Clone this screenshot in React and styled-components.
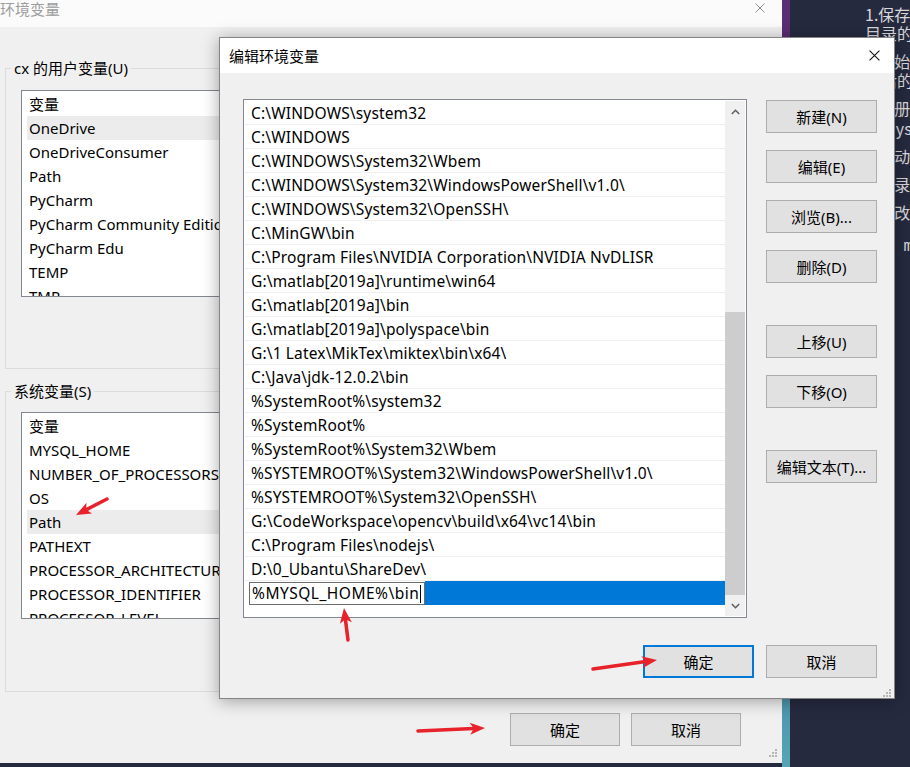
import React from 'react';
import styled, { createGlobalStyle } from 'styled-components';

const GlobalStyle = createGlobalStyle`
  html, body {
    margin: 0;
    padding: 0;
  }
  body {
    width: 910px;
    height: 767px;
    overflow: hidden;
    font-family: "Noto Sans", "Noto Sans CJK SC", sans-serif;
    font-size: 15px;
    color: #000;
  }
`;

const Desktop = styled.div`
  position: relative;
  width: 910px;
  height: 767px;
  overflow: hidden;
  background: #262a3f;
`;

const EdgeStrip = styled.div`
  position: absolute;
  left: 782px;
  top: 0;
  width: 8px;
  height: 100%;
  background: linear-gradient(#5b2d72 0%, #5b2d72 12%, #4a8ea6 88%, #58a4b7 100%);
`;

/* editor window behind the dialogs */
const Notes = styled.div`
  position: absolute;
  left: 865px;
  top: 5px;
  width: 320px;
  color: #d8d8dc;
  font-family: "Noto Sans CJK SC", sans-serif;
  font-size: 16px;
  line-height: 19px;
`;

const NoteLine = styled.p`
  margin: 0 0 ${p => (p.$gap !== undefined ? p.$gap : 9)}px;
  white-space: nowrap;
  font-family: ${p => (p.$mono ? '"Liberation Mono", monospace' : 'inherit')};
`;

/* ---------- 环境变量 window ---------- */
const Window = styled.div`
  position: absolute;
  left: 0;
  top: -6px;
  width: 782px;
  height: 769px;
  background: #f0f0f0;
  display: flex;
  flex-direction: column;
`;

const WindowTitle = styled.div`
  height: 33px;
  flex: none;
  display: flex;
  justify-content: space-between;
  align-items: flex-start;
  background: #fbfbfb;
  line-height: 30px;
  color: ${p => (p.$inactive ? '#9d9d9d' : '#000')};
  font-family: "Noto Sans CJK SC", sans-serif;
  padding-right: 17px;
`;

const CloseIcon = styled.svg`
  margin-top: ${p => p.$top}px;
  flex: none;
`;

const WindowBody = styled.div`
  flex: 1;
  display: flex;
  flex-direction: column;
  padding: 0 7px 0 5px;
`;

const Group = styled.fieldset`
  margin: ${p => p.$top}px 0 0;
  padding: ${p => p.$padTop}px 0 ${p => p.$padBottom}px 15px;
  border: 1px solid #dcdcdc;
  min-width: 0;
`;

const GroupLabel = styled.legend`
  padding: 0 3px;
  margin-left: -10px;
  line-height: 20px;
  font-size: 15px;
`;

const VarList = styled.div`
  box-sizing: border-box;
  width: 740px;
  height: 207px;
  border: 1px solid #828790;
  background: #fff;
  padding: 1px 0 0 5px;
  overflow: hidden;
`;

const VarRow = styled.div`
  height: 24px;
  line-height: 24px;
  padding-left: 2px;
  white-space: nowrap;
  background: ${p => (p.$hover ? '#ececec' : 'transparent')};
`;

const Footer = styled.div`
  display: flex;
  justify-content: flex-end;
  gap: 11px;
  margin-top: 21px;
  padding-right: 34px;
`;

const Button = styled.button`
  box-sizing: border-box;
  width: ${p => p.$w || 111}px;
  height: 33px;
  margin: ${p => p.$mt || 0}px 0 0;
  padding: 0;
  background: #e1e1e1;
  border: ${p => (p.$primary ? '2px solid #0078d7' : '1px solid #adadad')};
  font-family: "Noto Sans", "Noto Sans CJK SC", sans-serif;
  font-size: 15px;
  color: #000;
  white-space: nowrap;
`;

const Grip = styled.svg`
  position: absolute;
  right: ${p => p.$right}px;
  bottom: ${p => p.$bottom}px;
`;

/* ---------- 编辑环境变量 dialog ---------- */
const Dialog = styled.div`
  position: absolute;
  left: 219px;
  top: 37px;
  width: 676px;
  height: 662px;
  box-sizing: border-box;
  border: 1px solid #858585;
  background: #f0f0f0;
  box-shadow: 0 2px 16px rgba(0, 0, 0, 0.35);
  display: flex;
  flex-direction: column;
`;

const DialogTitle = styled.div`
  height: 35px;
  flex: none;
  display: flex;
  align-items: center;
  justify-content: space-between;
  padding: 0 14px 0 9px;
  background: #fff;
  font-family: "Noto Sans CJK SC", sans-serif;
`;

const DialogBody = styled.div`
  flex: 1;
  display: grid;
  grid-template-columns: 504px 111px;
  grid-template-rows: 519px 33px;
  column-gap: 19px;
  row-gap: 27px;
  padding: 26px 17px 20px 23px;
`;

const PathList = styled.div`
  box-sizing: border-box;
  border: 1px solid #828790;
  background: #fff;
  padding: 1px;
  display: flex;
  overflow: hidden;
  font-size: 15.5px;
  letter-spacing: 0.15px;
`;

const Rows = styled.div`
  flex: 1;
  display: flex;
  flex-direction: column;
`;

const PathRow = styled.div`
  box-sizing: border-box;
  height: 24px;
  padding: 1px 0 0 6px;
  line-height: 22px;
  border-bottom: 1px solid #efefef;
  white-space: nowrap;
  overflow: hidden;
`;

const EditingRow = styled.div`
  height: 24px;
  display: flex;
  padding-left: 4px;
`;

const EditBox = styled.div`
  box-sizing: border-box;
  height: 23px;
  margin-top: 1px;
  padding: 0 3px 0 2px;
  border: 1px solid #6d6d6d;
  background: #fff;
  line-height: 21px;
  display: flex;
  align-items: center;
  white-space: nowrap;
  letter-spacing: 0.5px;
`;

const Caret = styled.span`
  width: 1px;
  height: 18px;
  margin-left: 1px;
  background: #000;
`;

const SelectedFill = styled.div`
  flex: 1;
  background: #0078d7;
`;

const ScrollBar = styled.div`
  width: 20px;
  flex: none;
  display: flex;
  flex-direction: column;
  background: #f0f0f0;
`;

const ScrollArrow = styled.div`
  height: 21px;
  flex: none;
  display: flex;
  align-items: center;
  justify-content: center;
`;

const ScrollTrack = styled.div`
  flex: 1;
  display: flex;
  flex-direction: column;
  justify-content: flex-end;
`;

const ScrollThumb = styled.div`
  height: 283px;
  background: #cdcdcd;
`;

const SideButtons = styled.div`
  display: flex;
  flex-direction: column;
`;

const DialogFooter = styled.div`
  grid-column: 1 / -1;
  display: flex;
  justify-content: flex-end;
  gap: 12px;
`;

const Annotations = styled.svg`
  position: absolute;
  left: 0;
  top: 0;
  pointer-events: none;
`;

const userVars = [
  'OneDrive',
  'OneDriveConsumer',
  'Path',
  'PyCharm',
  'PyCharm Community Edition',
  'PyCharm Edu',
  'TEMP',
  'TMP',
];

const systemVars = [
  'MYSQL_HOME',
  'NUMBER_OF_PROCESSORS',
  'OS',
  'Path',
  'PATHEXT',
  'PROCESSOR_ARCHITECTURE',
  'PROCESSOR_IDENTIFIER',
  'PROCESSOR_LEVEL',
];

const paths = [
  'C:\\WINDOWS\\system32',
  'C:\\WINDOWS',
  'C:\\WINDOWS\\System32\\Wbem',
  'C:\\WINDOWS\\System32\\WindowsPowerShell\\v1.0\\',
  'C:\\WINDOWS\\System32\\OpenSSH\\',
  'C:\\MinGW\\bin',
  'C:\\Program Files\\NVIDIA Corporation\\NVIDIA NvDLISR',
  'G:\\matlab[2019a]\\runtime\\win64',
  'G:\\matlab[2019a]\\bin',
  'G:\\matlab[2019a]\\polyspace\\bin',
  'G:\\1 Latex\\MikTex\\miktex\\bin\\x64\\',
  'C:\\Java\\jdk-12.0.2\\bin',
  '%SystemRoot%\\system32',
  '%SystemRoot%',
  '%SystemRoot%\\System32\\Wbem',
  '%SYSTEMROOT%\\System32\\WindowsPowerShell\\v1.0\\',
  '%SYSTEMROOT%\\System32\\OpenSSH\\',
  'G:\\CodeWorkspace\\opencv\\build\\x64\\vc14\\bin',
  'C:\\Program Files\\nodejs\\',
  'D:\\0_Ubantu\\ShareDev\\',
];

const arrows = [
  [107, 499, 76, 515],
  [348, 640, 344, 608],
  [593, 669, 657, 660],
  [418, 731, 485, 728],
];

function Cross({ size, color, top }) {
  return (
    <CloseIcon $top={top} width={size} height={size} viewBox="0 0 10 10">
      <path d="M0.5 0.5L9.5 9.5M9.5 0.5L0.5 9.5" stroke={color} strokeWidth="1" fill="none" />
    </CloseIcon>
  );
}

function Chevron({ up }) {
  return (
    <svg width="9" height="6" viewBox="0 0 9 6">
      <path
        d={up ? 'M0.8 5L4.5 1.3L8.2 5' : 'M0.8 1L4.5 4.7L8.2 1'}
        stroke="#606060"
        strokeWidth="1.6"
        fill="none"
      />
    </svg>
  );
}

function ResizeGrip({ right, bottom }) {
  const dots = [
    [6, 0], [6, 3], [3, 3], [6, 6], [3, 6], [0, 6],
  ];
  return (
    <Grip $right={right} $bottom={bottom} width="8" height="8" viewBox="0 0 8 8">
      {dots.map(([x, y]) => (
        <rect key={`${x}-${y}`} x={x} y={y} width="2" height="2" fill="#b5b5b5" />
      ))}
    </Grip>
  );
}

function Arrow({ x1, y1, x2, y2 }) {
  const dx = x2 - x1;
  const dy = y2 - y1;
  const len = Math.sqrt(dx * dx + dy * dy);
  const ux = dx / len;
  const uy = dy / len;
  const head = 15;
  const half = 6;
  const bx = x2 - ux * head;
  const by = y2 - uy * head;
  const nx = x2 - ux * head * 0.75;
  const ny = y2 - uy * head * 0.75;
  const pts = [
    [x2, y2],
    [bx - uy * half, by + ux * half],
    [nx, ny],
    [bx + uy * half, by - ux * half],
  ]
    .map(p => p.join(','))
    .join(' ');
  return (
    <g>
      <line x1={x1} y1={y1} x2={nx} y2={ny} stroke="#e8222b" strokeWidth="3.5" strokeLinecap="round" />
      <polygon points={pts} fill="#e8222b" />
    </g>
  );
}

export default function App() {
  return (
    <Desktop>
      <GlobalStyle />
      <EdgeStrip />

      <Notes>
        <NoteLine $gap={0}>1.保存后进入 MySQL 安装</NoteLine>
        <NoteLine>目录的 bin 文件夹</NoteLine>
        <NoteLine $gap={0}>2.开始初始化数据库</NoteLine>
        <NoteLine>之后的操作</NoteLine>
        <NoteLine $gap={1}>3.注册服务</NoteLine>
        <NoteLine>用mysqld --install</NoteLine>
        <NoteLine>4.启动服务</NoteLine>
        <NoteLine>5.登录 MySQL</NoteLine>
        <NoteLine $gap={16}>6.修改密码</NoteLine>
        <NoteLine $mono>use mysql;</NoteLine>
      </Notes>

      <Window>
        <WindowTitle $inactive>
          <span>环境变量</span>
          <Cross size={10} color="#8c8c8c" top={9} />
        </WindowTitle>
        <WindowBody>
          <Group $top={31} $padTop={12} $padBottom={71}>
            <GroupLabel>cx 的用户变量(U)</GroupLabel>
            <VarList>
              <VarRow>变量</VarRow>
              {userVars.map((name, i) => (
                <VarRow key={name} $hover={i === 0}>{name}</VarRow>
              ))}
            </VarList>
          </Group>
          <Group $top={12} $padTop={11} $padBottom={72}>
            <GroupLabel>系统变量(S)</GroupLabel>
            <VarList>
              <VarRow>变量</VarRow>
              {systemVars.map((name, i) => (
                <VarRow key={name} $hover={i === 3}>{name}</VarRow>
              ))}
            </VarList>
          </Group>
          <Footer>
            <Button $w={110}>确定</Button>
            <Button $w={110}>取消</Button>
          </Footer>
        </WindowBody>
        <ResizeGrip right={5} bottom={6} />
      </Window>

      <Dialog>
        <DialogTitle>
          <span>编辑环境变量</span>
          <Cross size={11} color="#111" top={0} />
        </DialogTitle>
        <DialogBody>
          <PathList>
            <Rows>
              {paths.map(p => (
                <PathRow key={p}>{p}</PathRow>
              ))}
              <EditingRow>
                <EditBox>
                  %MYSQL_HOME%\bin
                  <Caret />
                </EditBox>
                <SelectedFill />
              </EditingRow>
            </Rows>
            <ScrollBar>
              <ScrollArrow>
                <Chevron up />
              </ScrollArrow>
              <ScrollTrack>
                <ScrollThumb />
              </ScrollTrack>
              <ScrollArrow>
                <Chevron />
              </ScrollArrow>
            </ScrollBar>
          </PathList>
          <SideButtons>
            <Button $mt={1}>新建(N)</Button>
            <Button $mt={17}>编辑(E)</Button>
            <Button $mt={17}>浏览(B)...</Button>
            <Button $mt={17}>删除(D)</Button>
            <Button $mt={42}>上移(U)</Button>
            <Button $mt={17}>下移(O)</Button>
            <Button $mt={42}>编辑文本(T)...</Button>
          </SideButtons>
          <DialogFooter>
            <Button $primary>确定</Button>
            <Button>取消</Button>
          </DialogFooter>
        </DialogBody>
        <ResizeGrip right={3} bottom={1} />
      </Dialog>

      <Annotations width="910" height="767" viewBox="0 0 910 767">
        {arrows.map(([x1, y1, x2, y2]) => (
          <Arrow key={`${x1}-${y1}`} x1={x1} y1={y1} x2={x2} y2={y2} />
        ))}
      </Annotations>
    </Desktop>
  );
}
